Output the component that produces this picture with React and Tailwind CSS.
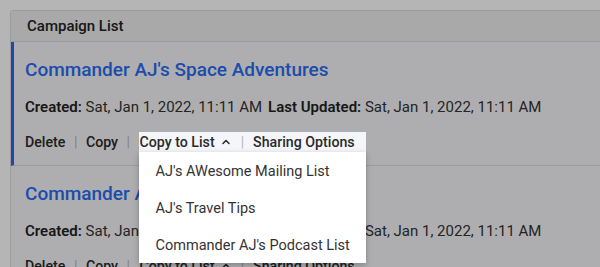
import React from "react";

function ChevronUp() {
  return (
    <svg width="12" height="12" viewBox="0 0 24 24" fill="none" stroke="currentColor" strokeWidth="3" strokeLinecap="round" strokeLinejoin="round" className="ml-[5px]">
      <path d="M6 15l6-6 6 6" />
    </svg>
  );
}

function Sep() {
  return <span className="mx-[8.5px] text-[#b8b8b8] font-normal">|</span>;
}

function Item({ selected, open }) {
  return (
    <div
      className={
        "border-l-[3px] pl-[11px] pt-[16px] pb-[13px] bg-[#f5f6f8] border-b border-b-[#d9dbe0] " +
        (selected ? "border-l-[#2a67f5]" : "border-l-transparent")
      }
    >
      <div className="text-[19px] leading-[24px] font-medium text-[#2a6cf3]">
        Commander AJ's Space Adventures
      </div>
      <div className="mt-[14px] text-[15px] leading-[22px] text-[#333]">
        <span className="font-semibold text-[#222]">Created:</span> Sat, Jan 1, 2022, 11:11 AM
        <span className="ml-[6px] font-semibold text-[#222]">Last Updated:</span> Sat, Jan 1, 2022, 11:11 AM
      </div>
      <div className="mt-[14px] flex items-center text-[14.2px] leading-[20px] font-medium text-[#2a2a2a]">
        <span>Delete</span>
        <Sep />
        <span>Copy</span>
        <Sep />
        <div className={"relative w-[227px] flex items-center pl-[1px] " + (open ? "z-20 bg-[#f4f6fa]" : "")}>
          <span className="flex items-center">
            Copy to List
            <ChevronUp />
          </span>
          <span className="mx-[9px] text-[#b8b8b8] font-normal">|</span>
          <span>Sharing Options</span>
          {open && (
            <div className="absolute left-0 top-[20px] w-[227px] bg-white shadow-[0_2px_6px_rgba(0,0,0,0.25)] font-normal text-[#333] text-[14.5px] pt-[1px]">
              <div className="h-[37px] flex items-center pl-[17px]">AJ's AWesome Mailing List</div>
              <div className="h-[38px] flex items-center pl-[17px]">AJ's Travel Tips</div>
              <div className="h-[35px] flex items-center pl-[17px]">Commander AJ's Podcast List</div>
            </div>
          )}
        </div>
      </div>
    </div>
  );
}

export default function App() {
  return (
    <div className="relative h-[267px] overflow-hidden bg-white pt-[10px] pl-[10px] font-['Roboto',sans-serif]">
      <div className="border-l border-t border-[#dcdcdc] rounded-tl-[3px]">
        <div className="h-[31px] flex items-center pl-[16px] bg-[#eeeeee] border-b border-[#d6dcea] text-[15px] font-medium text-[#222]">
          Campaign List
        </div>
        <Item selected open />
        <Item />
      </div>
      <div className="absolute inset-0 z-10 bg-black/[0.29]"></div>
    </div>
  );
}
